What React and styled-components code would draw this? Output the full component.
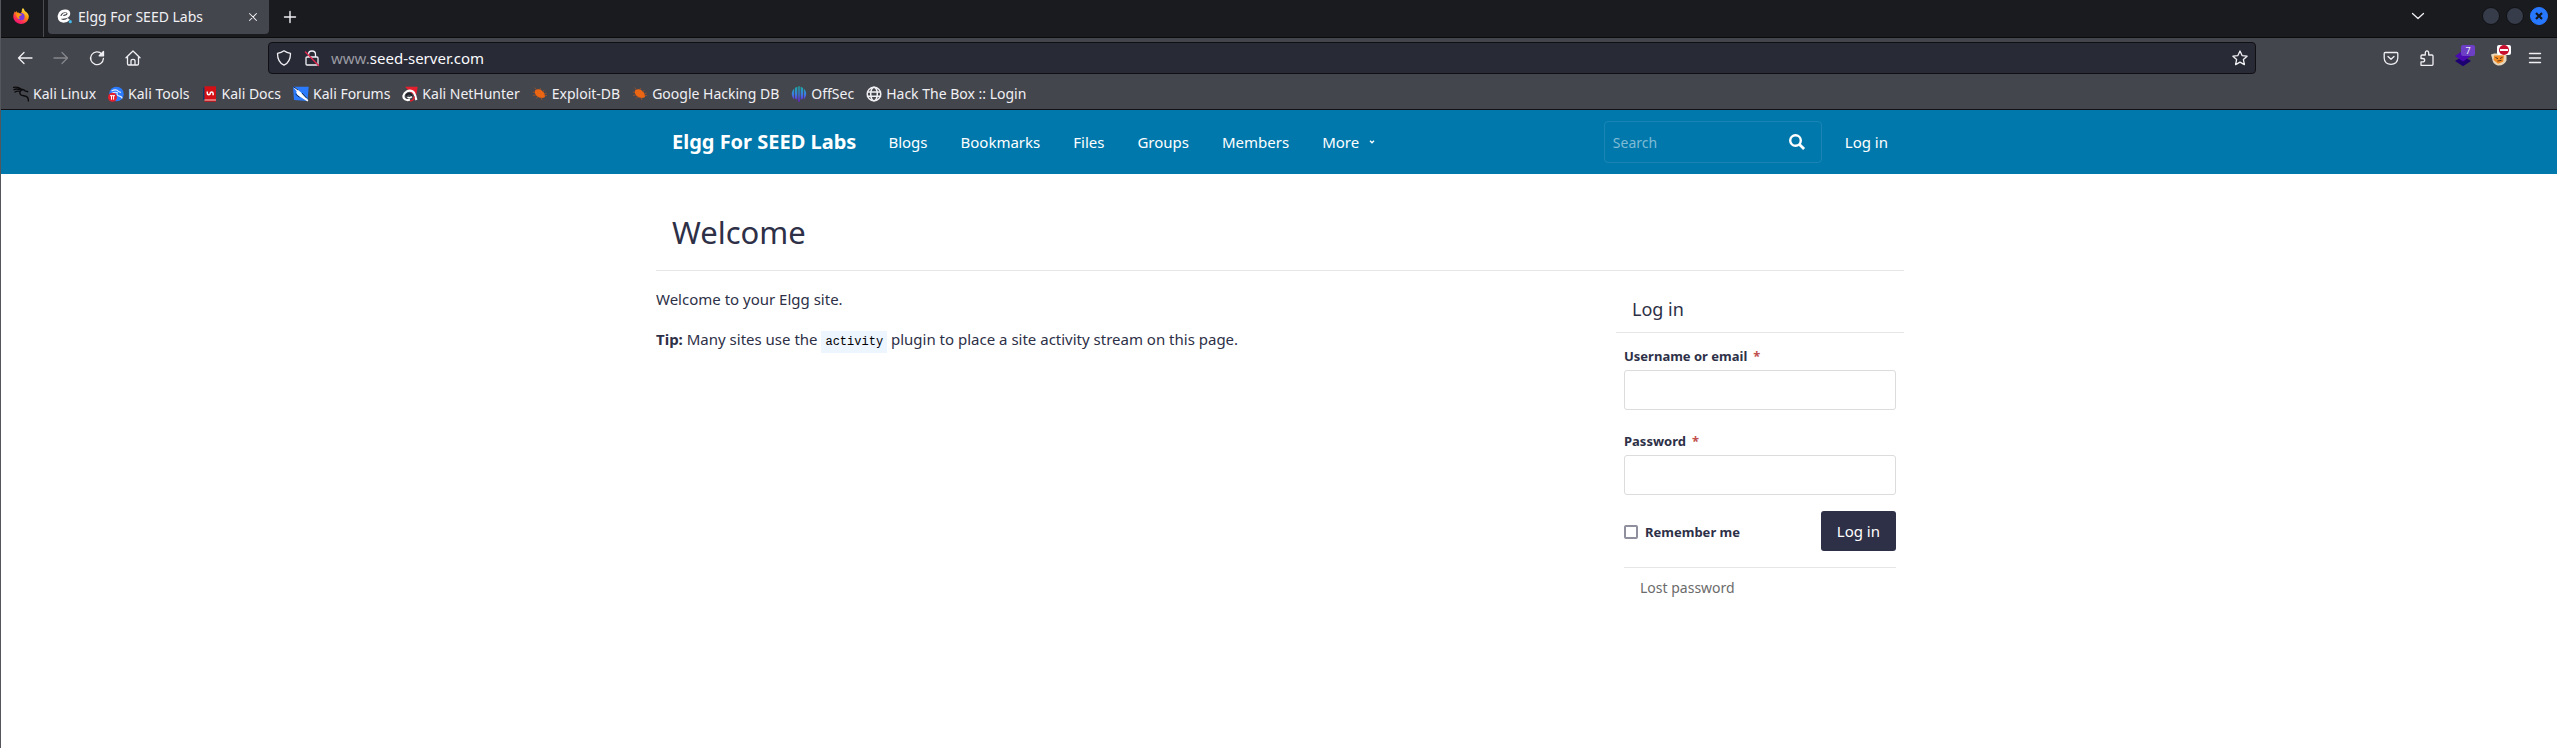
import React from "react";
import styled, { createGlobalStyle } from "styled-components";

const GlobalStyle = createGlobalStyle`
  *, *::before, *::after { box-sizing: border-box; }
  html, body { margin: 0; background: #fff; }
  body { font-family: "Noto Sans", "Open Sans", sans-serif; font-size: 15px; color: #2d3047; }
  #root { border-left: 1px solid #55565b; min-height: 100vh; }
  button, input { font: inherit; color: inherit; margin: 0; }
  a { color: inherit; text-decoration: none; }
  svg { display: block; flex: none; overflow: visible; }
`;

/* ---------- browser window ---------- */

const Chrome = styled.div`
  background: #44464d;
  color: #f0f0f4;
  font-size: 14px;
  line-height: 20px;
  border-bottom: 1px solid #131316;
`;

const TabStrip = styled.div`
  display: flex;
  align-items: stretch;
  height: 38px;
  background: #1a1b1f;
  border-bottom: 1px solid #0c0c0d;
`;

const PinnedTab = styled.button`
  display: flex;
  align-items: center;
  width: 43px;
  padding: 0 0 6px 12px;
  border: 0;
  border-right: 1px solid #4b4c50;
  background: none;
`;

const Tab = styled.div`
  display: flex;
  align-items: center;
  gap: 5px;
  width: 221px;
  height: 34px;
  margin-left: 4px;
  padding: 0 8px 0 9px;
  border-radius: 0 0 4px 4px;
  background: #44464d;
`;

const TabTitle = styled.span`
  flex: 1;
  white-space: nowrap;
`;

const IconButton = styled.button`
  display: flex;
  align-items: center;
  justify-content: center;
  position: relative;
  width: ${(p) => p.$width || 36}px;
  height: ${(p) => p.$height || 32}px;
  padding: 0;
  border: 0;
  background: none;
  color: ${(p) => (p.$faded ? "#85868b" : "#f0f0f4")};
`;

const WindowControls = styled.div`
  display: flex;
  gap: 6px;
  align-items: center;
  height: 32px;
  margin: 0 9px 0 56px;
`;

const WindowButton = styled.button`
  display: flex;
  align-items: center;
  justify-content: center;
  width: 18px;
  height: 18px;
  padding: 0;
  border: 1px solid ${(p) => (p.$close ? "#2777ff" : "#101114")};
  border-radius: 50%;
  background: ${(p) => (p.$close ? "#2777ff" : "#373c4a")};
`;

const Spacer = styled.div`
  flex: 1;
`;

const Toolbar = styled.div`
  display: flex;
  align-items: center;
  height: 40px;
  padding: 0 4px 0 6px;
`;

const NavButtons = styled.div`
  display: flex;
  width: 261px;
`;

const UrlBar = styled.div`
  display: flex;
  align-items: center;
  flex: 1;
  height: 32px;
  padding-right: 1px;
  border: 1px solid #101014;
  border-radius: 4px;
  background: #282a36;
`;

const UrlText = styled.span`
  flex: 1;
  padding-left: 6px;
  font-size: 15px;
  color: #9a9ba2;

  b { font-weight: 400; color: #fbfbfe; }
`;

const Actions = styled.div`
  display: flex;
  justify-content: flex-end;
  width: 297px;
`;

const CountBadge = styled.span`
  position: absolute;
  top: 3px;
  right: 6px;
  width: 14px;
  height: 11px;
  border-radius: 2px;
  background: #6c3fc4;
  font-size: 9px;
  line-height: 11px;
  text-align: center;
`;

const BlockBadge = styled.span`
  position: absolute;
  top: 3px;
  right: 6px;
  padding: 0 2px;
  border-radius: 2px;
  background: #fff;
`;

const Bookmarks = styled.nav`
  display: flex;
  align-items: center;
  gap: 12px;
  height: 31px;
  padding: 0 12px;
`;

const Bookmark = styled.a`
  display: flex;
  align-items: center;
  gap: 4px;
  white-space: nowrap;
`;

function FirefoxLogo() {
  return (
    <svg width="16" height="16" viewBox="0 0 16 16">
      <defs>
        <linearGradient id="ffFlame" x1="0.8" y1="0" x2="0.2" y2="1">
          <stop offset="0" stopColor="#fff44f" />
          <stop offset="0.4" stopColor="#ff980e" />
          <stop offset="0.7" stopColor="#ff3750" />
          <stop offset="1" stopColor="#eb0878" />
        </linearGradient>
      </defs>
      <path fill="url(#ffFlame)" d="M10 0c1 1 1.500 2 1.800 2.900L13.500 4.200C15 5.500 16 7 15.800 9c-.4 4-3.700 6.900-7.800 6.900C3.700 15.900.3 12.700.3 8.600.3 6.600 1 4.800 1.900 3.300l.3 1.300L3.600 3l.4 1.600c1.200-.3 2.300.1 3 .8L8.800 4C8.500 2.500 9 1 10 0z" />
      <circle cx="8" cy="8.700" r="3.600" fill="#7a3bdc" />
      <path fill="#ff980e" d="M3.500 5.200c1.500-.7 3-.2 3.800.9l1.600.3c-.4 1-1.400 1.400-2.400 1.500-.8 1.200-.4 2.600.9 3.200-2.600.2-4.500-2.300-3.900-5.900z" />
    </svg>
  );
}

function ElggLogo() {
  return (
    <svg width="16" height="16" viewBox="0 0 16 16">
      <path d="M2.800 7.900C6 9.200 11.600 8 11.900 4.800 12 1.200 5.500.7 2.900 4.500.6 8.200 2.500 12.300 6.500 12.300c2.300 0 4-.9 5.300-2.500" fill="none" stroke="#fff" strokeWidth="2.700" />
      <path d="M5 7C6.200 4.800 8 4.200 9.300 4.600" fill="none" stroke="#fff" strokeWidth="1.400" />
      <circle cx="13.300" cy="12.700" r="1.600" fill="#45b8e8" />
    </svg>
  );
}

const Line = ({ size = 16, w = 1.3, children }) => (
  <svg width={size} height={size} viewBox="0 0 16 16" fill="none" stroke="currentColor" strokeWidth={w} strokeLinecap="round" strokeLinejoin="round">
    {children}
  </svg>
);

function KaliLinuxIcon() {
  return (
    <svg width="16" height="16" viewBox="0 0 16 16" fill="none" stroke="#0b0b0d" strokeWidth="1.400" strokeLinecap="round">
      <path d="M.6 1.400C4 .6 6 1.300 8.500 3.200M1 3.600c2-.9 4-.8 6 0M2 6c1.300-.9 2.500-1 4-.9M8.500 3.200c1.500.2 3 .7 3.600 1.700l2.500.8M9 3.800C6.600 5 6.100 7.500 8 9c1.900 1.200 5 .3 6.600 2.500.7 1 .8 2.300.8 3.400" />
    </svg>
  );
}

function KaliToolsIcon() {
  return (
    <svg width="16" height="16" viewBox="0 0 16 16">
      <circle cx="8.500" cy="8" r="7.300" fill="#2a7bff" />
      <path d="M3.500 5C7 3.200 9.500 4 10.500 5.500L13 6.400M4 7.300c2-1.100 4-1.200 5.300-.6-1 2.300.6 3.200 2.200 3.400 1.500.3 2.500 1.300 2.500 2.300" fill="none" stroke="#e6efff" strokeWidth="1.100" />
      <circle cx="4.500" cy="11.300" r="4.500" fill="#e5202e" />
      <path d="M2 9.700h5M3.500 9.700v4M5.600 9.700v4" stroke="#fff" strokeWidth="1" />
    </svg>
  );
}

function KaliDocsIcon() {
  return (
    <svg width="16" height="16" viewBox="0 0 16 16">
      <path fill="#123a66" d="M1 1.500h3V14H1z" />
      <path fill="#d50f16" d="M2.500.3h11.500v15.400h-11.500z" />
      <path d="M2.500 14h11.500" stroke="#f3cfcf" strokeWidth="1" />
      <path d="M5.300 5.500v1.700c0 2 2.900 2 2.900.2s2.900-1.800 2.900.2v1.700" fill="none" stroke="#fff" strokeWidth="1.500" />
    </svg>
  );
}

function KaliForumsIcon() {
  return (
    <svg width="16" height="16" viewBox="0 0 16 16">
      <path fill="#2a7bff" d="M0 .7h15.700L14.500 15 1 14z" />
      <path fill="#fff" d="m.8 1.700 2 .5 5 4 1.800 2.400 5.700 5.600-.8 1.200-7-4.300-3-2-1.400-3 .8-.5z" />
      <path d="M.5.800 5 4M9 7l4.500 5M2.500 8l4 3.300" stroke="#111827" strokeWidth=".8" />
    </svg>
  );
}

function KaliNetHunterIcon() {
  return (
    <svg width="16" height="16" viewBox="0 0 16 16">
      <path fill="#e5202e" d="M3 .8h12.700L14 10.500 8 6z" />
      <path d="M14.500 14C12.500 10 14 7 10.500 5.200 6.500 3.500 2.500 6 1.500 9.500c-.6 3.500 3 5.500 6.500 4" fill="none" stroke="#fff" strokeWidth="2.200" />
      <path d="M4 9.500C6 6.800 9.500 7.300 9.800 9.800" fill="none" stroke="#16181f" strokeWidth="1.600" />
      <path d="M5.500 11c1.200 1 3 .8 4.300-.3" fill="none" stroke="#fff" strokeWidth="1.600" />
      <path d="M8 15c2.500-.3 4-2 4.200-4.500" fill="none" stroke="#e5202e" strokeWidth="1.600" />
    </svg>
  );
}

function ExploitIcon() {
  return (
    <svg width="16" height="16" viewBox="0 0 16 16">
      <path fill="#ec6513" d="M3 4.500C5 2.800 8 3 10 4.800c2.200 1.600 3.200 3.700 3 6.200-2.400 1.600-5.800 1-8-.8C3.200 8.700 2.400 6.500 3 4.500z" />
      <path d="M5 4 2.500 1.800M8 3.500 8.500 2M10.500 5.500l1.800-1M3 6.500.8 6M4 8.800 1 9.500M6 10.700l-2 2M9 11.500l1 2.500M12.500 9.500H15M12.500 7.500l2-.3" stroke="#a85222" strokeWidth=".8" />
    </svg>
  );
}

function OffSecIcon() {
  return (
    <svg width="16" height="16" viewBox="0 0 16 16">
      <defs>
        <linearGradient id="offsec" gradientUnits="userSpaceOnUse" x1="0" y1="0" x2="0" y2="16">
          <stop offset="0" stopColor="#16b0a3" />
          <stop offset="0.5" stopColor="#3a7fe0" />
          <stop offset="1" stopColor="#6f16e0" />
        </linearGradient>
      </defs>
      <path fill="url(#offsec)" d="M7.300.3h1.400v15.400H7.300zM6.300.8v13l-2.300-1.300V2C5 1.300 5.500 1 6.300.8zM9.700.8v13l2.300-1.300V2C11 1.300 10.500 1 9.700.8zM3.200 2.600v10.900C0 10.500 0 5.500 3.200 2.600zM12.800 2.600v10.900c3.200-3 3.200-8 0-10.900z" />
    </svg>
  );
}

function GlobeIcon() {
  return (
    <Line w={1.5}>
      <circle cx="8" cy="8" r="6.800" />
      <ellipse cx="8" cy="8" rx="3.300" ry="6.800" />
      <path d="M1.500 6h13M1.500 10.200h13" />
    </Line>
  );
}

const BOOKMARKS = [
  ["Kali Linux", KaliLinuxIcon],
  ["Kali Tools", KaliToolsIcon],
  ["Kali Docs", KaliDocsIcon],
  ["Kali Forums", KaliForumsIcon],
  ["Kali NetHunter", KaliNetHunterIcon],
  ["Exploit-DB", ExploitIcon],
  ["Google Hacking DB", ExploitIcon],
  ["OffSec", OffSecIcon],
  ["Hack The Box :: Login", GlobeIcon],
];

function BrowserChrome() {
  return (
    <Chrome>
      <TabStrip>
        <PinnedTab aria-label="Firefox"><FirefoxLogo /></PinnedTab>
        <Tab>
          <ElggLogo />
          <TabTitle>Elgg For SEED Labs</TabTitle>
          <IconButton $width={16} aria-label="Close tab">
            <Line size={14} w={1.2}><path d="m4 4 8 8M12 4l-8 8" /></Line>
          </IconButton>
        </Tab>
        <IconButton $width={42} $height={33} aria-label="New tab">
          <Line w={1.4}><path d="M8 2.500v11M2.500 8h11" /></Line>
        </IconButton>
        <Spacer />
        <IconButton $width={16} aria-label="List all tabs">
          <Line><path d="m2.500 5.500 5.500 5 5.500-5" /></Line>
        </IconButton>
        <WindowControls>
          <WindowButton aria-label="Minimize" />
          <WindowButton aria-label="Maximize" />
          <WindowButton $close aria-label="Close">
            <svg width="8" height="8" viewBox="0 0 8 8"><path d="m1 1 6 6M7 1 1 7" stroke="#14161c" strokeWidth="2.200" /></svg>
          </WindowButton>
        </WindowControls>
      </TabStrip>
      <Toolbar>
        <NavButtons>
          <IconButton aria-label="Back"><Line><path d="M15 8H1.500M7 2.500 1.500 8 7 13.500" /></Line></IconButton>
          <IconButton $faded aria-label="Forward"><Line><path d="M1 8h13.500M9 2.500 14.500 8 9 13.500" /></Line></IconButton>
          <IconButton aria-label="Reload">
            <Line>
              <path d="M12.800 4A6.400 6.400 0 1 0 14.400 8.500" />
              <path d="M14.500 1.500v4.300h-4.300z" fill="currentColor" />
            </Line>
          </IconButton>
          <IconButton aria-label="Home">
            <Line><path d="M1 7.700 8 1l7 6.700M2.500 6.500v7.300c0 .8.400 1.200 1.200 1.200h8.600c.8 0 1.200-.4 1.200-1.200V6.500M6 15v-4c0-2.300 4-2.300 4 0v4" /></Line>
          </IconButton>
        </NavButtons>
        <UrlBar>
          <IconButton $width={30} aria-label="Tracking protection">
            <Line><path d="M8 .8c2 1.500 4 2.200 6.500 2.600C14.500 9 12.500 13 8 15.200 3.500 13 1.500 9 1.500 3.400 4 3 6 2.300 8 .8z" /></Line>
          </IconButton>
          <IconButton $width={26} aria-label="Connection not secure">
            <Line>
              <path d="M4.500 7V4.500C4.500-.2 11.500-.2 11.500 4.500V7M3 7h10c.6 0 1 .4 1 1v6c0 .6-.4 1-1 1H3c-.6 0-1-.4-1-1V8c0-.6.400-1 1-1z" />
              <path d="m1.500 2 13 13.500" stroke="#e22850" strokeWidth="1.400" />
            </Line>
          </IconButton>
          <UrlText>www.<b>seed-server.com</b></UrlText>
          <IconButton $width={28} aria-label="Bookmark this page">
            <Line><path d="m8 1 2.100 4.600 5 .6-3.700 3.400 1 5L8 12.100l-4.400 2.500 1-5L.9 6.200l5-.6z" /></Line>
          </IconButton>
        </UrlBar>
        <Actions>
          <IconButton aria-label="Save to Pocket">
            <Line><path d="M2.200 2.500h11.600c.6 0 1 .4 1 1V8c0 4-3 6.300-6.800 6.300S1.200 12 1.200 8V3.500c0-.6.400-1 1-1zM5 6.500l3 2.800 3-2.800" /></Line>
          </IconButton>
          <IconButton aria-label="Extensions">
            <Line><path d="M2 15.300h11c.7 0 1-.4 1-1V6c0-.7-.3-1-1-1H9.700V3C9.700.1 6.300.1 6.300 3v2H3c-.7 0-1 .3-1 1v2.500h1.700c2.600 0 2.600 3.400 0 3.400H2z" /></Line>
          </IconButton>
          <IconButton aria-label="Layers extension">
            <svg width="16" height="16" viewBox="0 0 16 16">
              <path fill="#1c0072" d="m8 6 8 5-8 5.300L0 11z" />
              <path fill="#4a0bb0" d="m8 .5 8 5.500-8 5.500L0 6z" />
            </svg>
            <CountBadge>7</CountBadge>
          </IconButton>
          <IconButton aria-label="Proxy extension">
            <svg width="16" height="16" viewBox="0 0 16 16">
              <path fill="#e8d6bb" d="m0 4.500 3-1h9l3.500 2v5c-1.600 3.500-4.300 5-7.500 5-3.500 0-6.300-2.500-6.600-6z" />
              <path fill="#f28b25" d="M3 5.500h10l-.8 6.300-5.200 1.900L2.600 10z" />
              <path d="M4.500 7.500 7 8.700M9 8.500l2.500-1.200M6.500 11l4-.6" stroke="#593516" />
            </svg>
            <BlockBadge>
              <svg width="10" height="10" viewBox="0 0 10 10"><circle cx="5" cy="5" r="5" fill="#c8102e" /><path d="M1 5h8" stroke="#fff" strokeWidth="2" /></svg>
            </BlockBadge>
          </IconButton>
          <IconButton aria-label="Menu"><Line w={1.4}><path d="M2.500 3.500h11M2.500 8h11M2.500 12.500h11" /></Line></IconButton>
        </Actions>
      </Toolbar>
      <Bookmarks>
        {BOOKMARKS.map(([label, Icon]) => (
          <Bookmark key={label} href="#"><Icon />{label}</Bookmark>
        ))}
      </Bookmarks>
    </Chrome>
  );
}

/* ---------- site ---------- */

const Container = styled.div`
  width: 100%;
  max-width: 1280px;
  margin: 0 auto;
  padding: 0 16px;
`;

const Topbar = styled.header`
  padding-left: 2px;
  background: #0078ac;
  color: #fff;
`;

const Page = styled.div`
  padding-left: 2px;
`;

const TopbarRow = styled(Container)`
  display: flex;
  align-items: center;
  height: 64px;
`;

const SiteTitle = styled.a`
  padding: 0 16px;
  font-size: 20px;
  font-weight: 700;
  line-height: 28px;
  white-space: nowrap;
`;

const SiteNav = styled.nav`
  display: flex;
  flex: 1;
  gap: 1px;
`;

const NavLink = styled.a`
  display: flex;
  align-items: center;
  gap: 10px;
  padding: 0 16px;
  line-height: 24px;
  white-space: nowrap;
`;

const SearchBox = styled.form`
  display: flex;
  align-items: center;
  width: 218px;
  height: 42px;
  margin-right: 7px;
  padding: 0 8px;
  border: 1px solid #1a85b4;
  border-radius: 4px;
`;

const SearchInput = styled.input`
  flex: 1;
  min-width: 0;
  padding: 0;
  border: 0;
  outline: 0;
  background: none;
  font-size: 14px;

  &::placeholder { color: #7fbbd5; opacity: 1; }
`;

const PageTitle = styled.h1`
  margin: 0 0 16px;
  padding: 32px 16px 12px;
  border-bottom: 1px solid #e6e6e6;
  font-size: 31px;
  font-weight: 400;
  line-height: 52px;
`;

const Columns = styled.div`
  display: flex;
  gap: 32px;
`;

const Main = styled.main`
  flex: 1;

  p { margin: 0 0 16px; line-height: 24px; }
`;

const Code = styled.code`
  padding: 4px;
  background: #edf5ff;
  color: #000;
  font-family: "Liberation Mono", monospace;
  font-size: 12px;
`;

const Sidebar = styled.aside`
  width: 288px;
`;

const PanelTitle = styled.h2`
  margin: 0;
  padding: 8px 16px;
  border-bottom: 1px solid #e6e6e6;
  font-size: 18px;
  font-weight: 400;
  line-height: 29px;
`;

const LoginForm = styled.form`
  padding: 12px 8px;
`;

const Field = styled.div`
  margin-bottom: 20px;
`;

const Label = styled.label`
  display: block;
  padding-bottom: 2px;
  font-size: 13px;
  font-weight: 700;
  line-height: 23px;
`;

const Required = styled.span`
  margin-left: 6px;
  color: #c0504d;
`;

const TextInput = styled.input`
  display: block;
  width: 100%;
  height: 40px;
  padding: 0 8px;
  border: 1px solid #dcdcdc;
  border-radius: 3px;
  background: #fff;
`;

const FormFooter = styled.div`
  display: flex;
  align-items: center;
  justify-content: space-between;
  margin: -4px 0 16px;
`;

const Remember = styled.label`
  display: flex;
  align-items: center;
  gap: 7px;
  padding-top: 2px;
  font-size: 13px;
  font-weight: 700;
`;

const Checkbox = styled.input`
  appearance: none;
  width: 14px;
  height: 14px;
  border: 2px solid #8f8f9d;
  border-radius: 2px;
  background: #fff;
`;

const Submit = styled.button`
  height: 40px;
  padding: 0 16px;
  border: 0;
  border-radius: 3px;
  background: #2d3047;
  color: #fff;
`;

const FormLinks = styled.div`
  padding: 8px 16px;
  border-top: 1px solid #e6e6e6;
  color: #6b6b6b;
  font-size: 14px;
  line-height: 24px;
`;

export default function App() {
  return (
    <>
      <GlobalStyle />
      <BrowserChrome />
      <Topbar>
        <TopbarRow>
          <SiteTitle href="#">Elgg For SEED Labs</SiteTitle>
          <SiteNav>
            {["Blogs", "Bookmarks", "Files", "Groups", "Members"].map((t) => (
              <NavLink key={t} href="#">{t}</NavLink>
            ))}
            <NavLink href="#">
              More
              <svg width="6" height="4" viewBox="0 0 6 4"><path d="m1 .8 2 2 2-2" fill="none" stroke="#fff" strokeWidth="1.300" /></svg>
            </NavLink>
          </SiteNav>
          <SearchBox>
            <SearchInput type="search" placeholder="Search" aria-label="Search" />
            <IconButton $width={32} type="button" aria-label="Submit search">
              <svg width="16" height="16" viewBox="0 0 16 16" fill="none" stroke="#fff">
                <circle cx="6.500" cy="6.500" r="5.300" strokeWidth="2.400" />
                <path d="m10.500 10.500 4.600 4.600" strokeWidth="2.800" />
              </svg>
            </IconButton>
          </SearchBox>
          <NavLink href="#">Log in</NavLink>
        </TopbarRow>
      </Topbar>
      <Page>
        <Container>
          <PageTitle>Welcome</PageTitle>
          <Columns>
            <Main>
              <p>Welcome to your Elgg site.</p>
              <p><b>Tip:</b> Many sites use the <Code>activity</Code> plugin to place a site activity stream on this page.</p>
            </Main>
            <Sidebar>
              <PanelTitle>Log in</PanelTitle>
              <LoginForm>
                <Field>
                  <Label htmlFor="username">Username or email<Required>*</Required></Label>
                  <TextInput id="username" type="text" />
                </Field>
                <Field>
                  <Label htmlFor="password">Password<Required>*</Required></Label>
                  <TextInput id="password" type="password" />
                </Field>
                <FormFooter>
                  <Remember><Checkbox type="checkbox" />Remember me</Remember>
                  <Submit type="button">Log in</Submit>
                </FormFooter>
                <FormLinks><a href="#">Lost password</a></FormLinks>
              </LoginForm>
            </Sidebar>
          </Columns>
        </Container>
      </Page>
    </>
  );
}
